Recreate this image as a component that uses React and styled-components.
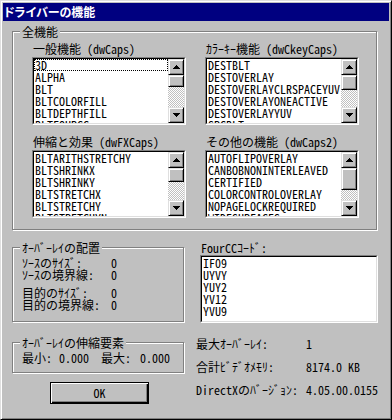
import React from 'react'
import styled, { createGlobalStyle } from 'styled-components'

const lists = [
  { title: '一般機能 (dwCaps)', thumb: 12, focus: true, items: ['3D', 'ALPHA', 'BLT', 'BLTCOLORFILL', 'BLTDEPTHFILL', 'BLTFOURCC'] },
  { title: 'ｶﾗｰｷｰ機能 (dwCkeyCaps)', thumb: 15, items: ['DESTBLT', 'DESTOVERLAY', 'DESTOVERLAYCLRSPACEYUV', 'DESTOVERLAYONEACTIVE', 'DESTOVERLAYYUV', 'SRCBLT'] },
  { title: '伸縮と効果 (dwFXCaps)', thumb: 14, items: ['BLTARITHSTRETCHY', 'BLTSHRINKX', 'BLTSHRINKY', 'BLTSTRETCHX', 'BLTSTRETCHY', 'BLTSTRETCHYN'] },
  { title: 'その他の機能 (dwCaps2)', thumb: 22, items: ['AUTOFLIPOVERLAY', 'CANBOBNONINTERLEAVED', 'CERTIFIED', 'COLORCONTROLOVERLAY', 'NOPAGELOCKREQUIRED', 'WIDESURFACES'] },
]

const placement = [
  ['ｿｰｽのｻｲｽﾞ:', '0', 0],
  ['ｿｰｽの境界線:', '0', 0],
  ['目的のｻｲｽﾞ:', '0', 6],
  ['目的の境界線:', '0', 0],
]

const fourcc = ['IF09', 'UYVY', 'YUY2', 'YV12', 'YVU9']

function App() {
  return (
    <>
      <GlobalStyle />
      <Window>
        <TitleBar>ドライバーの機能</TitleBar>
        <Body>
          <Group $w={365}>
            <Legend>全機能</Legend>
            <CapsGrid>
              {lists.map(l => (
                <div key={l.title}>
                  <Caption>{l.title}</Caption>
                  <ListBox items={l.items} thumb={l.thumb} focus={l.focus} />
                </div>
              ))}
            </CapsGrid>
          </Group>

          <Bottom>
            <LeftCol>
              <Group $w={172}>
                <Legend>ｵｰﾊﾞｰﾚｲの配置</Legend>
                <PlaceList>
                  {placement.map(([label, value, gap]) => (
                    <PlaceRow key={label} $gap={gap}>
                      <span>{label}</span><span>{value}</span>
                    </PlaceRow>
                  ))}
                </PlaceList>
              </Group>
              <Group $w={172} $top={14}>
                <Legend>ｵｰﾊﾞｰﾚｲの伸縮要素</Legend>
                <ScaleRow>
                  <span>最小:</span><span>0.000</span>
                  <span>最大:</span><span>0.000</span>
                </ScaleRow>
              </Group>
              <OkButton>OK</OkButton>
            </LeftCol>

            <RightCol>
              <FourCCBlock>
                <Caption $gap={1}>FourCCｺｰﾄﾞ:</Caption>
                <Field $w={178}>
                  <FieldInner>
                    <Rows>
                      {fourcc.map(c => <Row key={c}>{c}</Row>)}
                    </Rows>
                  </FieldInner>
                </Field>
              </FourCCBlock>
              <InfoGrid>
                <span>最大ｵｰﾊﾞｰﾚｲ:</span><span>1</span>
                <span>合計ﾋﾞﾃﾞｵﾒﾓﾘ:</span><span>8174.0 KB</span>
                <span>DirectXのﾊﾞｰｼﾞｮﾝ:</span><span>4.05.00.0155</span>
              </InfoGrid>
            </RightCol>
          </Bottom>
        </Body>
      </Window>
    </>
  )
}

function Arrow({ down }) {
  return (
    <svg width="7" height="4" viewBox="0 0 7 4" shapeRendering="crispEdges"
      style={down ? { transform: 'scaleY(-1)' } : undefined}>
      <path d="M3 0h1v1h-1z M2 1h3v1h-3z M1 2h5v1h-5z M0 3h7v1h-7z" fill="#000" />
    </svg>
  )
}

function ListBox({ items, thumb, focus }) {
  return (
    <Field $w={154}>
      <FieldInner>
        <Rows>
          {items.map((it, i) => <Row key={it} $focus={focus && i === 0}>{it}</Row>)}
        </Rows>
        <ScrollBar>
          <ScrollBtn><Arrow /></ScrollBtn>
          <Thumb $h={thumb} />
          <Track />
          <ScrollBtn><Arrow down /></ScrollBtn>
        </ScrollBar>
      </FieldInner>
    </Field>
  )
}

export default App

const GlobalStyle = createGlobalStyle`
  html, body { margin: 0; padding: 0; background: #c0c0c0; }
  body {
    font-family: "Noto Sans Mono CJK JP", "Noto Sans CJK JP", "DejaVu Sans Mono", monospace;
    font-size: 12px;
    color: #000;
  }
`

const Window = styled.div`
  box-sizing: border-box;
  width: 392px;
  height: 420px;
  background: #c0c0c0;
  border: 1px solid;
  border-color: #dfdfdf #000 #000 #dfdfdf;
  box-shadow: inset 1px 1px #fff, inset -1px -1px #808080;
  padding: 2px;
  display: flex;
  flex-direction: column;
`

const TitleBar = styled.div`
  height: 18px;
  line-height: 18px;
  background: #000080;
  color: #fff;
  font-family: "Noto Sans CJK JP", sans-serif;
  font-weight: 700;
  font-size: 12px;
  font-feature-settings: "palt";
  padding-left: 1px;
`

const Body = styled.div`
  padding: 4px 0 0 9px;
  display: flex;
  flex-direction: column;
`

const Group = styled.fieldset`
  box-sizing: border-box;
  width: ${p => p.$w}px;
  min-width: 0;
  margin: ${p => p.$top || 0}px 0 0 0;
  padding: 0;
  border: 1px solid #808080;
  box-shadow: inset 1px 1px #fff, 1px 1px #fff;
`

const Legend = styled.legend`
  margin-left: 7px;
  padding: 0 2px;
  background: #c0c0c0;
  line-height: 13px;
  font-size: 12px;
`

const CapsGrid = styled.div`
  display: grid;
  grid-template-columns: 154px 154px;
  column-gap: 19px;
  row-gap: 10px;
  padding: 4px 17px 11px 19px;
`

const Caption = styled.div`
  line-height: 13px;
  height: 13px;
  margin-bottom: ${p => p.$gap ?? 2}px;
  padding-left: 1px;
  white-space: nowrap;
`

const Field = styled.div`
  box-sizing: border-box;
  width: ${p => p.$w}px;
  height: 68px;
  border: 1px solid;
  border-color: #808080 #fff #fff #808080;
`

const FieldInner = styled.div`
  box-sizing: border-box;
  height: 100%;
  border: 1px solid;
  border-color: #000 #dfdfdf #dfdfdf #000;
  background: #fff;
  display: flex;
`

const Rows = styled.div`
  flex: 1;
  overflow: hidden;
  min-width: 0;
`

const Row = styled.div`
  height: 12px;
  line-height: 12px;
  padding-left: 1px;
  white-space: nowrap;
  outline: ${p => (p.$focus ? '1px dotted #000' : 'none')};
  outline-offset: -1px;
`

const ScrollBar = styled.div`
  width: 16px;
  display: flex;
  flex-direction: column;
`

const raised = `
  box-sizing: border-box;
  background: #c0c0c0;
  border: 1px solid;
  border-color: #dfdfdf #000 #000 #dfdfdf;
  box-shadow: inset 1px 1px #fff, inset -1px -1px #808080;
`

const ScrollBtn = styled.div`
  ${raised}
  height: 16px;
  display: flex;
  align-items: center;
  justify-content: center;
`

const Thumb = styled.div`
  ${raised}
  height: ${p => p.$h}px;
`

const Track = styled.div`
  flex: 1;
  background: repeating-conic-gradient(#c0c0c0 0 25%, #fff 0 50%) 0 0 / 2px 2px;
`

const Bottom = styled.div`
  display: flex;
  gap: 12px;
  margin-top: 11px;
`

const LeftCol = styled.div`
  width: 172px;
  display: flex;
  flex-direction: column;
`

const PlaceList = styled.div`
  padding: 3px 0 10px 9px;
`

const PlaceRow = styled.div`
  display: grid;
  grid-template-columns: 89px auto;
  height: 12px;
  line-height: 12px;
  margin-top: ${p => p.$gap}px;
  white-space: nowrap;
`

const ScaleRow = styled.div`
  display: grid;
  grid-template-columns: 37px 42px 39px auto;
  line-height: 12px;
  padding: 3px 0 8px 9px;
  white-space: nowrap;
`

const OkButton = styled.button`
  box-sizing: border-box;
  width: 99px;
  height: 22px;
  margin: 9px 0 0 38px;
  padding: 0;
  font: inherit;
  line-height: 18px;
  color: #000;
  background: #c0c0c0;
  border: 1px solid #000;
  box-shadow: inset 1px 1px #fff, inset -1px -1px #000, inset -2px -2px #808080;
`

const RightCol = styled.div`
  width: 182px;
  display: flex;
  flex-direction: column;
`

const FourCCBlock = styled.div`
  margin-left: 4px;
  display: flex;
  flex-direction: column;
`

const InfoGrid = styled.div`
  display: grid;
  grid-template-columns: 110px auto;
  grid-auto-rows: 13px;
  row-gap: 10px;
  line-height: 13px;
  margin-top: 14px;
  white-space: nowrap;
`
